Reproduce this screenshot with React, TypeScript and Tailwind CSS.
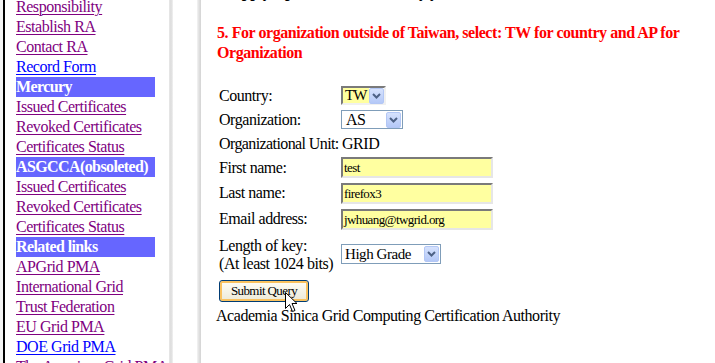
import React from 'react'

const serif = { fontFamily: '"Liberation Serif", "Times New Roman", serif' }

type NavItem = { label: string; kind: 'visited' | 'link' | 'head' }

const navItems: NavItem[] = [
  { label: 'Responsibility', kind: 'visited' },
  { label: 'Establish RA', kind: 'visited' },
  { label: 'Contact RA', kind: 'visited' },
  { label: 'Record Form', kind: 'link' },
  { label: 'Mercury', kind: 'head' },
  { label: 'Issued Certificates', kind: 'visited' },
  { label: 'Revoked Certificates', kind: 'visited' },
  { label: 'Certificates Status', kind: 'visited' },
  { label: 'ASGCCA(obsoleted)', kind: 'head' },
  { label: 'Issued Certificates', kind: 'visited' },
  { label: 'Revoked Certificates', kind: 'visited' },
  { label: 'Certificates Status', kind: 'visited' },
  { label: 'Related links', kind: 'head' },
  { label: 'APGrid PMA', kind: 'visited' },
  { label: 'International Grid', kind: 'visited' },
  { label: 'Trust Federation', kind: 'visited' },
  { label: 'EU Grid PMA', kind: 'visited' },
  { label: 'DOE Grid PMA', kind: 'link' },
  { label: 'The Americas Grid PMA', kind: 'visited' },
]

function NavRow({ item }: { item: NavItem }) {
  if (item.kind === 'head') {
    return (
      <div className="h-[20px] w-[139px] bg-[#6666ff] text-white font-bold leading-[20px] whitespace-nowrap overflow-hidden tracking-[-0.6px]">
        {item.label}
      </div>
    )
  }
  return (
    <div className="h-[20px] leading-[20px] whitespace-nowrap">
      <a
        href="#"
        className={
          item.kind === 'visited'
            ? 'text-[#800080] underline decoration-1 underline-offset-2'
            : 'text-[#0000ff] underline decoration-1 underline-offset-2'
        }
      >
        {item.label}
      </a>
    </div>
  )
}

function DropArrow() {
  return (
    <div className="w-[15px] h-[16px] shrink-0 rounded-[2px] border border-[#b3c7f5] bg-gradient-to-b from-[#d6e2fd] to-[#b4c8f7] flex items-center justify-center">
      <svg width="9" height="6" viewBox="0 0 9 6">
        <path d="M1 1 L4.5 4.5 L8 1" fill="none" stroke="#4d6185" strokeWidth="2" />
      </svg>
    </div>
  )
}

function TextBox({ value }: { value: string }) {
  return (
    <div className="w-[152px] h-[21px] bg-[#ffffa0] border-2 border-t-[#7a7a7a] border-l-[#7a7a7a] border-b-[#e6e6e6] border-r-[#e6e6e6] text-[13px] tracking-[-0.6px] leading-[17px] pl-[1px] text-black">
      {value}
    </div>
  )
}

export default function App() {
  return (
    <div className="relative w-[715px] h-[363px] overflow-hidden bg-white flex text-[16px] tracking-[-0.45px] text-black" style={serif}>
      {/* left frame edge */}
      <div className="w-[3px] shrink-0 bg-[#f4f4f4]" />
      <div className="w-[2px] shrink-0 bg-black" />

      {/* Sidebar */}
      <div className="w-[164px] shrink-0 pl-[11px] -mt-[3px]">
        {navItems.map((item, i) => (
          <NavRow key={i} item={item} />
        ))}
      </div>

      {/* frame divider */}
      <div className="w-[4px] shrink-0 bg-gradient-to-r from-[#e8e8e8] via-[#dcdcdc] to-[#f2f2f2]" />
      <div className="w-[24px] shrink-0 bg-white" />
      <div className="w-[4px] shrink-0 bg-gradient-to-r from-[#f4f4f4] via-[#e0e0e0] to-[#d4d4d4]" />

      {/* Main content */}
      <div className="flex-1 pl-[16px]">
        <div className="-mt-[18px] h-[20px] font-bold leading-[20px] whitespace-nowrap">
          4. Apply a personal certificate by your Firefox
        </div>
        <div className="mt-[21px] text-[#ff0000] font-bold leading-[20px] w-[490px]">
          5. For organization outside of Taiwan, select: TW for country and AP for Organization
        </div>

        <div className="mt-[21px] pl-[2px] flex flex-col">
          <div className="h-[23px] flex items-center">
            <div className="w-[122px]">Country:</div>
            <div className="h-[19px] w-[45px] flex items-center border-2 border-t-[#7a7a7a] border-l-[#7a7a7a] border-b-[#f0f0f0] border-r-[#f0f0f0] bg-white">
              <div className="bg-[#ffffa0] h-full w-[27px] leading-[15px] pl-[2px] text-[15px] tracking-[-0.8px]">TW</div>
              <DropArrow />
            </div>
          </div>
          <div className="h-[25px] flex items-center">
            <div className="w-[122px]">Organization:</div>
            <div className="h-[19px] w-[62px] flex items-center justify-between border border-[#7f9db9] bg-white pr-[1px]">
              <div className="pl-[4px] leading-[17px]">AS</div>
              <DropArrow />
            </div>
          </div>
          <div className="h-[23px] flex items-center">
            <div className="w-[122px] whitespace-nowrap tracking-[-0.6px]">Organizational Unit:</div>
            <div className="pl-[1px]">GRID</div>
          </div>
          <div className="h-[25px] flex items-center">
            <div className="w-[122px]">First name:</div>
            <TextBox value="test" />
          </div>
          <div className="h-[26px] flex items-center">
            <div className="w-[122px]">Last name:</div>
            <TextBox value="firefox3" />
          </div>
          <div className="h-[26px] flex items-center">
            <div className="w-[122px]">Email address:</div>
            <TextBox value="jwhuang@twgrid.org" />
          </div>
          <div className="h-[44px] flex items-center">
            <div className="w-[122px] leading-[18px] whitespace-nowrap pt-[2px]">
              Length of key:
              <br />
              (At least 1024 bits)
            </div>
            <div className="h-[20px] w-[100px] flex items-center justify-between border border-[#7f9db9] bg-white pr-[1px]">
              <div className="pl-[3px] leading-[18px] text-[15px]">High Grade</div>
              <DropArrow />
            </div>
          </div>
          <div className="h-[29px] flex items-center">
            <button className="w-[90px] h-[22px] rounded-[3px] border border-[#003c74] bg-gradient-to-b from-[#fffef5] to-[#ece9d8] shadow-[inset_0_0_0_2px_#f9c25f] text-[13px] tracking-[-0.6px] leading-[18px] text-black" style={serif}>
              Submit Query
            </button>
          </div>
          <div className="-ml-[3px] h-[22px] leading-[22px] whitespace-nowrap">
            Academia Sinica Grid Computing Certification Authority
          </div>
        </div>
      </div>

      {/* mouse cursor */}
      <svg className="absolute left-[285px] top-[292px]" width="13" height="21" viewBox="0 0 13 21">
        <path
          d="M0.5 0.5 L0.5 16.5 L4.5 12.5 L7.5 19.5 L10 18.5 L7 11.5 L12 11.5 Z"
          fill="white"
          stroke="black"
          strokeWidth="1"
        />
      </svg>
    </div>
  )
}
